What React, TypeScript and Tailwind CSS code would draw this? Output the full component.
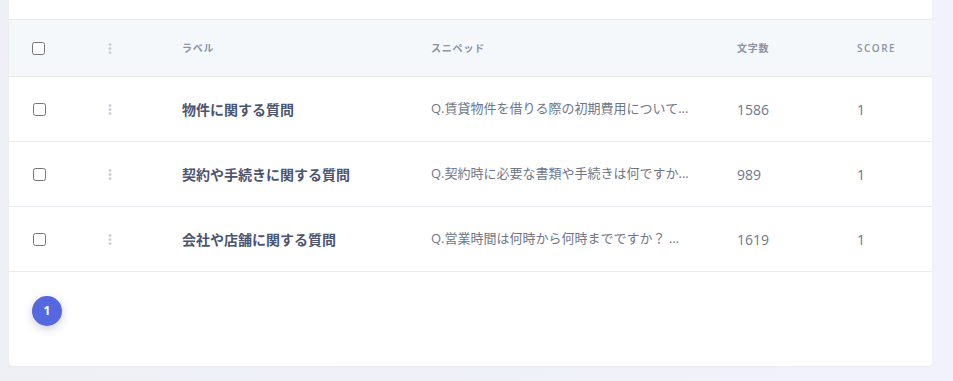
const rows = [
  { label: "物件に関する質問", snippet: "Q.賃貸物件を借りる際の初期費用について...", chars: 1586, score: 1 },
  { label: "契約や手続きに関する質問", snippet: "Q.契約時に必要な書類や手続きは何ですか...", chars: 989, score: 1 },
  { label: "会社や店舗に関する質問", snippet: "Q.営業時間は何時から何時までですか？ ...", chars: 1619, score: 1 },
]

const cols = "grid grid-cols-[77px_73px_249px_306px_120px_1fr] items-center pl-[23px]"

function Dots() {
  return (
    <svg width="4" height="11" viewBox="0 0 4 11" className="-ml-[1px]">
      <circle cx="2" cy="1.6" r="1.5" fill="#cdd1d9" />
      <circle cx="2" cy="5.5" r="1.5" fill="#cdd1d9" />
      <circle cx="2" cy="9.4" r="1.5" fill="#cdd1d9" />
    </svg>
  )
}

export default function App() {
  return (
    <div className="h-[381px] w-[953px] overflow-hidden bg-gradient-to-r from-[#eef0f6] to-[#f1f2fb] font-['Open_Sans','Noto_Sans_CJK_JP',sans-serif]">
      <div className="ml-[9px] w-[923px] rounded-b-[4px] bg-white shadow-[0_1px_3px_rgba(0,0,0,0.03)]">
        <div className="h-[20px] border-b border-[#e8ecf1]" />
        <div className={cols + " h-[57px] bg-[#f5f8fb] border-b border-[#e6eaef] text-[10px] font-semibold text-[#8c93a3] tracking-[0.08em]"}>
          <input type="checkbox" className="h-[13px] w-[13px] m-0" />
          <Dots />
          <div>ラベル</div>
          <div>スニペッド</div>
          <div>文字数</div>
          <div className="tracking-[0.15em]">SCORE</div>
        </div>
        {rows.map((r) => (
          <div key={r.label} className={cols + " h-[65px] border-b border-[#e8ebef] text-[13px]"}>
            <input type="checkbox" className="h-[13px] w-[13px] m-0 ml-[1px]" />
            <Dots />
            <div className="text-[14px] font-bold text-[#4b5470]">{r.label}</div>
            <div className="text-[#6f7687]">{r.snippet}</div>
            <div className="text-[14px] text-[#6f7687]">{r.chars}</div>
            <div className="text-[14px] text-[#6f7687]">{r.score}</div>
          </div>
        ))}
        <div className="h-[94px] pl-[23px] pt-[24px]">
          <button className="flex h-[30px] w-[30px] items-center justify-center rounded-full bg-[#5568e0] text-[12px] font-bold text-white shadow-[0_3px_8px_rgba(60,70,140,0.25)]">
            1
          </button>
        </div>
      </div>
    </div>
  )
}
